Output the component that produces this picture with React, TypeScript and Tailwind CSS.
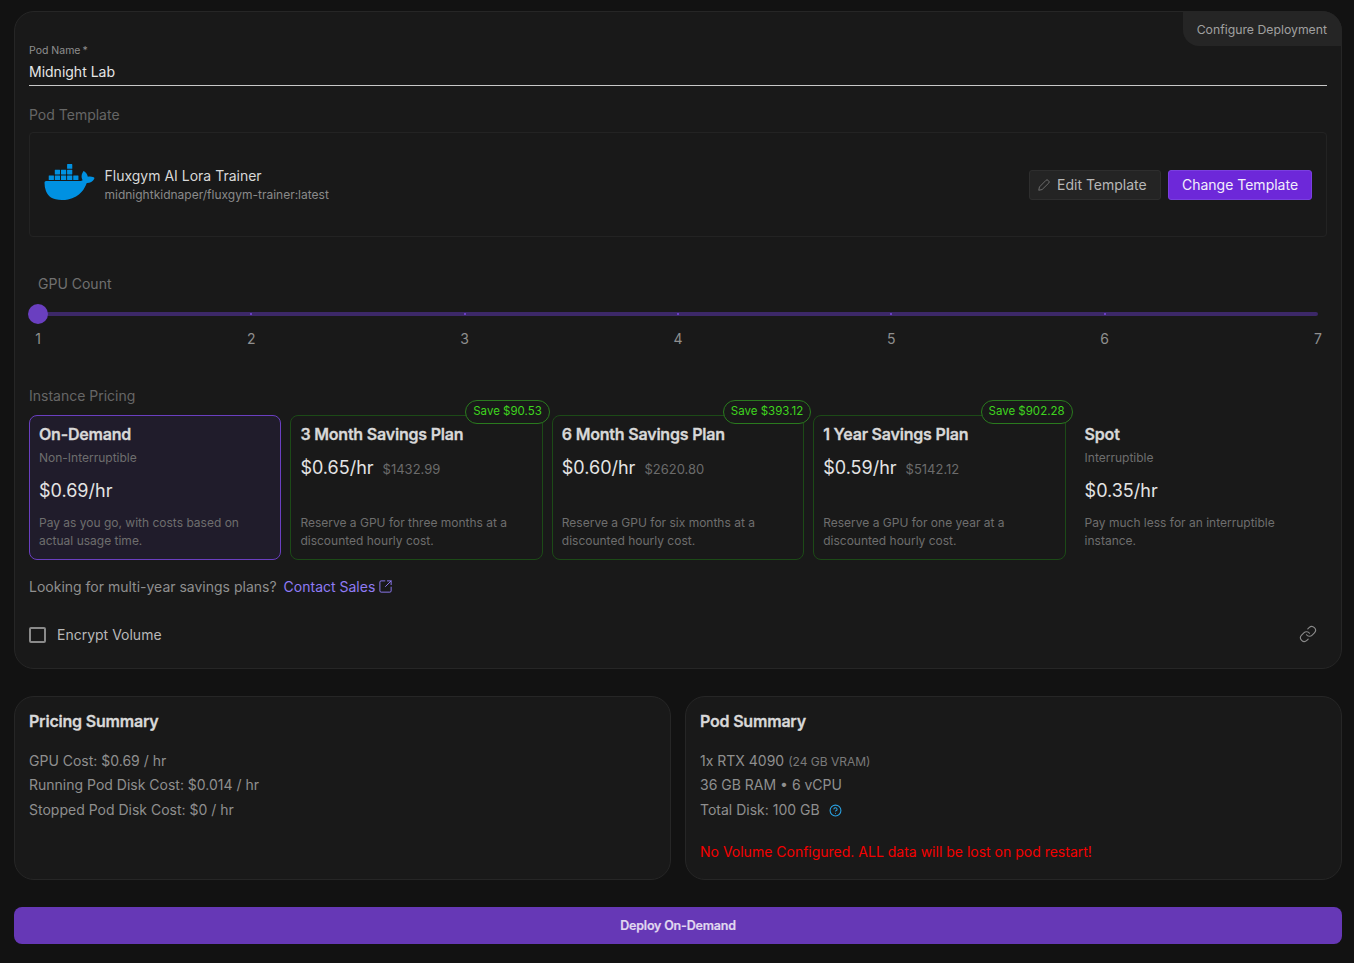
import React from "react";
import { SiDocker } from "react-icons/si";
import { CircleHelp, Link as LinkIcon, SquareArrowOutUpRight } from "lucide-react";

interface IPlan {
  name: string;
  sub?: string;
  price: string;
  total?: string;
  save?: string;
  desc: string[];
  kind: "selected" | "savings" | "plain";
}

const plans: IPlan[] = [
  {
    name: "On-Demand",
    sub: "Non-Interruptible",
    price: "$0.69/hr",
    desc: ["Pay as you go, with costs based on", "actual usage time."],
    kind: "selected",
  },
  {
    name: "3 Month Savings Plan",
    price: "$0.65/hr",
    total: "$1432.99",
    save: "Save $90.53",
    desc: ["Reserve a GPU for three months at a", "discounted hourly cost."],
    kind: "savings",
  },
  {
    name: "6 Month Savings Plan",
    price: "$0.60/hr",
    total: "$2620.80",
    save: "Save $393.12",
    desc: ["Reserve a GPU for six months at a", "discounted hourly cost."],
    kind: "savings",
  },
  {
    name: "1 Year Savings Plan",
    price: "$0.59/hr",
    total: "$5142.12",
    save: "Save $902.28",
    desc: ["Reserve a GPU for one year at a", "discounted hourly cost."],
    kind: "savings",
  },
  {
    name: "Spot",
    sub: "Interruptible",
    price: "$0.35/hr",
    desc: ["Pay much less for an interruptible", "instance."],
    kind: "plain",
  },
];

const PlanCard: React.FC<{ plan: IPlan }> = ({ plan }) => {
  const border =
    plan.kind === "selected"
      ? "border-[#6a3fc0] bg-[#201c2b]"
      : plan.kind === "savings"
        ? "border-[#1c4a17]"
        : "border-transparent";

  return (
    <div className={`relative flex h-[145px] flex-col rounded-lg border px-[9px] ${border}`}>
      {plan.save && (
        <span className="absolute right-[-8px] top-[-16px] flex h-[24px] items-center rounded-full border border-[#2a7a1e] bg-[#191919] px-[7px] text-[11.5px] text-[#3fd41f]">
          {plan.save}
        </span>
      )}
      <p className="mt-[7px] text-[16px] leading-[22px] font-semibold tracking-[-0.2px] text-[#d8d8d8] [-webkit-text-stroke:0.3px_#d8d8d8]">
        {plan.name}
      </p>
      {plan.sub ? (
        <>
          <p className="mt-[4px] text-[12px] leading-[18px] text-[#6e6e6e]">{plan.sub}</p>
          <p className="mt-[11px] text-[18px] leading-[26px] text-[#e4e4e4]">{plan.price}</p>
        </>
      ) : (
        <p className="mt-[10px] flex items-baseline gap-[9px] text-[18px] leading-[26px] text-[#e4e4e4]">
          {plan.price}
          <span className="text-[13px] text-[#6b6b6b]">{plan.total}</span>
        </p>
      )}
      <div className="mt-auto mb-[9px] text-[12px] leading-[18px] text-[#6e6e6e]">
        {plan.desc.map((line) => (
          <p key={line} className="whitespace-nowrap">
            {line}
          </p>
        ))}
      </div>
    </div>
  );
};

const GpuSlider: React.FC = () => (
  <div className="px-[9px]">
    <div className="relative h-[4px] rounded-full bg-[#3c2868]">
      {[1, 2, 3, 4, 5].map((n) => (
        <span
          key={n}
          className="absolute top-[1px] -ml-[1px] h-[2px] w-[2px] bg-[#6a3fc0]"
          style={{ left: `${(n / 6) * 100}%` }}
        />
      ))}
      <span className="absolute left-[-10px] top-[-8px] h-[20px] w-[20px] rounded-full bg-[#6a3fc0]" />
    </div>
    <div className="mt-[14px] flex justify-between text-[14px] leading-[18px] text-[#8f8f8f]">
      {[1, 2, 3, 4, 5, 6, 7].map((n) => (
        <span key={n} className="flex w-0 justify-center">
          {n}
        </span>
      ))}
    </div>
  </div>
);

export default function App() {
  return (
    <div className="min-h-[963px] bg-[#121212] pl-[14px] pr-[12px] pt-[11px] font-['Inter',sans-serif]">
      <section className="relative h-[658px] rounded-[20px] border border-[#262626] bg-[#191919] px-[14px]">
        <div className="absolute right-[-1px] top-[-1px] flex h-[35px] items-center rounded-tr-[20px] rounded-bl-[16px] bg-[#252525] pl-[14px] pr-[15px] pt-[3px] text-[12.25px] text-[#a0a0a0]">
          Configure Deployment
        </div>

        <label className="mt-[32px] block text-[10.5px] leading-[14px] text-[#8f8f8f]">
          Pod Name<span className="ml-[2px]">*</span>
        </label>
        <div className="mt-[4px] h-[24px] border-b border-[#c8c8c8] text-[14px] leading-[20px] text-[#e6e6e6]">
          Midnight Lab
        </div>

        <p className="mt-[19px] text-[14px] leading-[20px] text-[#666666]">Pod Template</p>
        <div className="mt-[7px] flex h-[105px] items-center justify-between rounded-[4px] border border-[#232323] pl-[13.5px] pr-[14px]">
          <div className="flex items-center gap-[10px]">
            <SiDocker className="mb-[6px] h-[50px] w-[51px] text-[#0091e2]" />
            <div>
              <p className="text-[14px] leading-[19px] text-[#d8d8d8]">Fluxgym AI Lora Trainer</p>
              <p className="mt-[2px] text-[12px] leading-[16px] text-[#8a8a8a]">midnightkidnaper/fluxgym-trainer:latest</p>
            </div>
          </div>
          <div className="flex gap-[7px]">
            <button className="flex h-[30px] w-[132px] items-center gap-[6px] rounded-[3px] border border-[#2e2e2e] bg-[#242424] pl-[7px] text-[14px] text-[#b8b8b8]">
              <svg viewBox="0 0 24 24" fill="none" stroke="currentColor" strokeWidth={1.4} strokeLinejoin="round" className="h-[14px] w-[14px] text-[#7a7a7a]">
                <path d="M3 21l1.2-5.6L15.5 3.9a2.4 2.4 0 0 1 3.4 0l1.3 1.3a2.4 2.4 0 0 1 0 3.4L8.7 19.8z" />
              </svg>
              Edit Template
            </button>
            <button className="flex h-[30px] w-[144px] items-center justify-center rounded-[3px] border border-[#7a3fe0] bg-[#6d28d9] text-[14px] text-[#f2eefc]">
              Change Template
            </button>
          </div>
        </div>

        <p className="mt-[37px] pl-[9px] text-[14px] leading-[20px] text-[#707070]">GPU Count</p>
        <div className="mt-[18px]">
          <GpuSlider />
        </div>

        <p className="mt-[38px] text-[14px] leading-[20px] text-[#666666]">Instance Pricing</p>
        <div className="mt-[9px] grid grid-cols-5 gap-[9px]">
          {plans.map((plan) => (
            <PlanCard key={plan.name} plan={plan} />
          ))}
        </div>

        <p className="mt-[17px] flex items-center text-[14px] leading-[20px] text-[#8f8f8f]">
          Looking for multi-year savings plans?
          <span className="ml-[7px] text-[#8f7bf5]">Contact Sales</span>
          <SquareArrowOutUpRight size={15} strokeWidth={1.5} className="mb-[1px] ml-[3px] text-[#8f7bf5]" />
        </p>

        <div className="mt-[28px] flex items-center justify-between">
          <div className="flex items-center gap-[11px]">
            <span className="h-[16px] w-[17px] rounded-[2px] border-2 border-[#8a8a8a]" />
            <span className="text-[14px] leading-[20px] text-[#b8b8b8]">Encrypt Volume</span>
          </div>
          <LinkIcon size={18} strokeWidth={1.5} className="mb-[2px] mr-[10px] text-[#8a8a8a]" />
        </div>
      </section>

      <div className="mt-[27px] grid grid-cols-2 gap-[14px]">
        <section className="h-[184px] rounded-[20px] border border-[#262626] bg-[#191919] px-[14px]">
          <h2 className="mt-[13px] text-[16px] leading-[22px] font-semibold tracking-[-0.2px] text-[#d8d8d8] [-webkit-text-stroke:0.3px_#d8d8d8]">
            Pricing Summary
          </h2>
          <div className="mt-[16.75px] text-[14px] leading-[24.5px] text-[#8f8f8f]">
            <p>GPU Cost: $0.69 / hr</p>
            <p>Running Pod Disk Cost: $0.014 / hr</p>
            <p>Stopped Pod Disk Cost: $0 / hr</p>
          </div>
        </section>
        <section className="h-[184px] rounded-[20px] border border-[#262626] bg-[#191919] px-[14px]">
          <h2 className="mt-[13px] text-[16px] leading-[22px] font-semibold tracking-[-0.2px] text-[#d8d8d8] [-webkit-text-stroke:0.3px_#d8d8d8]">
            Pod Summary
          </h2>
          <div className="mt-[16.75px] text-[14px] leading-[24.5px] text-[#8f8f8f]">
            <p className="h-[24.5px]">
              1x RTX 4090 <span className="text-[12px] leading-none text-[#7a7a7a]">(24 GB VRAM)</span>
            </p>
            <p>36 GB RAM • 6 vCPU</p>
            <p className="flex items-center">
              Total Disk: 100 GB
              <CircleHelp size={13} className="ml-[9px] text-[#2aa0e0]" />
            </p>
          </div>
          <p className="mt-[20px] text-[14px] leading-[20px] text-[#f40000]">
            No Volume Configured. ALL data will be lost on pod restart!
          </p>
        </section>
      </div>

      <button className="mt-[27px] flex h-[37px] w-full items-center justify-center rounded-lg bg-[#6638b6] pt-[1px] text-[12.5px] font-semibold tracking-[-0.2px] text-[#e0d8f0] [-webkit-text-stroke:0.2px_#e0d8f0]">
        Deploy On-Demand
      </button>
    </div>
  );
}
